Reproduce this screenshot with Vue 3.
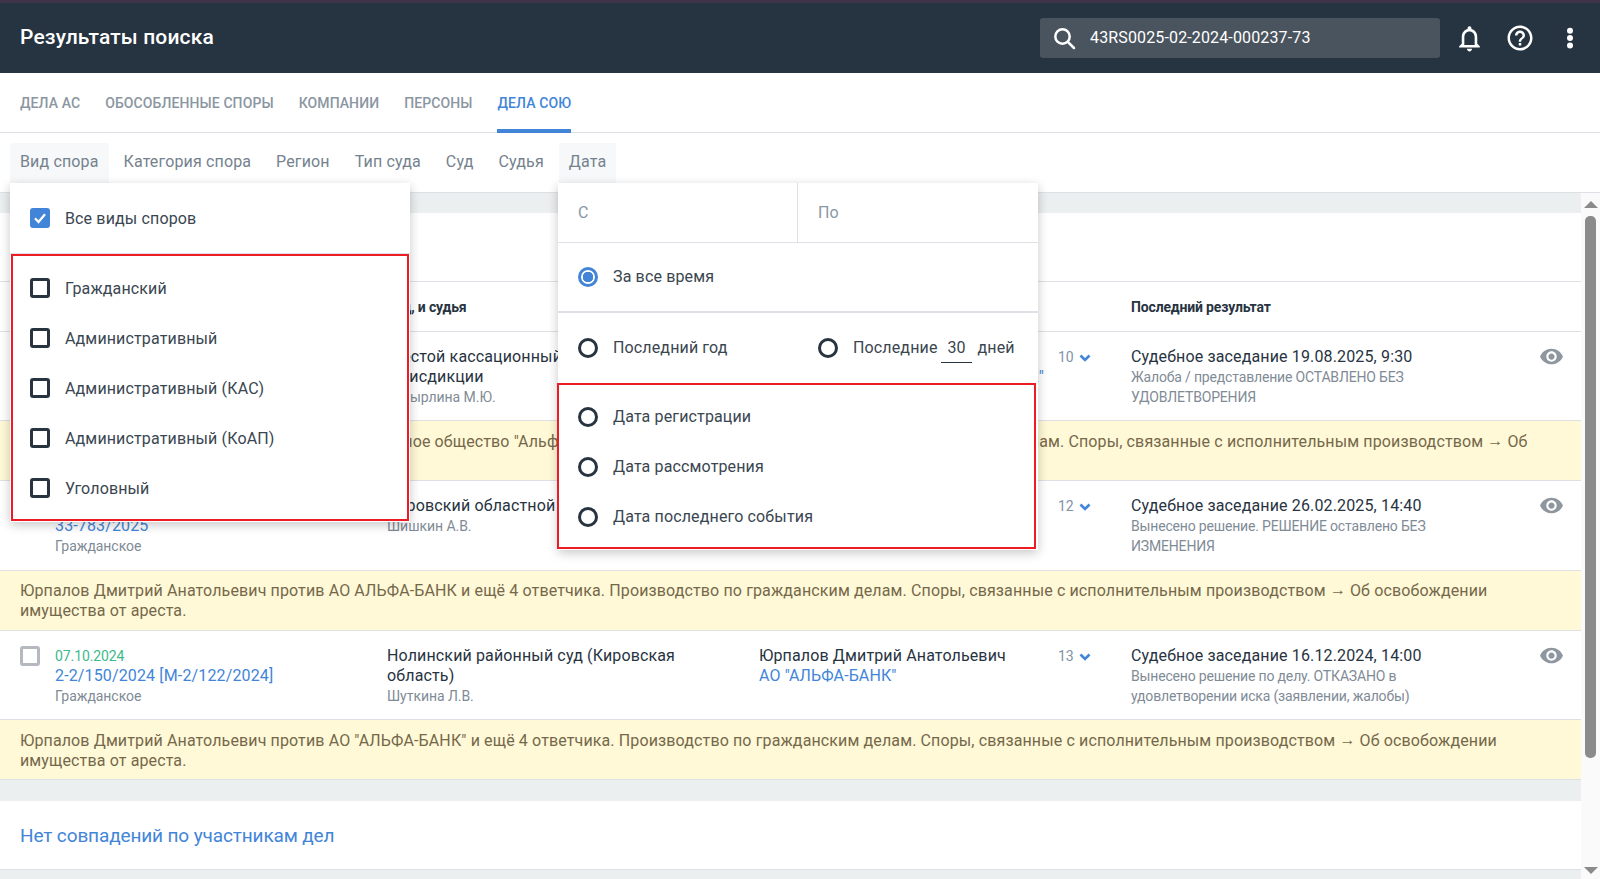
<script setup>
const tabs = ['Дела АС', 'Обособленные споры', 'Компании', 'Персоны', 'Дела СОЮ']
const filters = ['Вид спора', 'Категория спора', 'Регион', 'Тип суда', 'Суд', 'Судья', 'Дата']
const disputeKinds = ['Гражданский', 'Административный', 'Административный (КАС)', 'Административный (КоАП)', 'Уголовный']
const dateKinds = ['Дата регистрации', 'Дата рассмотрения', 'Дата последнего события']
const rows = [
  {
    date: '12.05.2025', number: '88-15420/2025', kind: 'Гражданское',
    court: 'Шестой кассационный суд общей юрисдикции', judge: 'Жмырлина М.Ю.',
    plaintiff: 'Юрпалов Дмитрий Анатольевич', defendant: 'Акционерное общество "Альфа-Банк"', count: 10,
    title: 'Судебное заседание 19.08.2025, 9:30', result: 'Жалоба / представление ОСТАВЛЕНО БЕЗ УДОВЛЕТВОРЕНИЯ',
    noteStart: 'Юрпалов Дмитрий Анатольевич против Акционерное общество "Альфа-Банк" и ещё 4 ответчика. Производство по гражданским делам. Споры, связанные с исполнительным производством '
  },
  {
    date: '20.01.2025', number: '33-783/2025', kind: 'Гражданское',
    court: 'Кировский областной суд', judge: 'Шишкин А.В.',
    plaintiff: 'Юрпалов Дмитрий Анатольевич', defendant: 'АО АЛЬФА-БАНК', count: 12,
    title: 'Судебное заседание 26.02.2025, 14:40', result: 'Вынесено решение. РЕШЕНИЕ оставлено БЕЗ ИЗМЕНЕНИЯ',
    noteStart: 'Юрпалов Дмитрий Анатольевич против АО АЛЬФА-БАНК и ещё 4 ответчика. Производство по гражданским делам. Споры, связанные с исполнительным производством '
  },
  {
    date: '07.10.2024', number: '2-2/150/2024 [М-2/122/2024]', kind: 'Гражданское',
    court: 'Нолинский районный суд (Кировская область)', judge: 'Шуткина Л.В.',
    plaintiff: 'Юрпалов Дмитрий Анатольевич', defendant: 'АО "АЛЬФА-БАНК"', count: 13,
    title: 'Судебное заседание 16.12.2024, 14:00', result: 'Вынесено решение по делу. ОТКАЗАНО в удовлетворении иска (заявлении, жалобы)',
    noteStart: 'Юрпалов Дмитрий Анатольевич против АО "АЛЬФА-БАНК" и ещё 4 ответчика. Производство по гражданским делам. Споры, связанные с исполнительным производством '
  }
]
</script>

<template>
  <div class="page">
    <header class="topbar">
      <h1 class="title">Результаты поиска</h1>
      <div class="search">
        <svg class="search-icon" width="26" height="26" viewBox="0 0 26 26" fill="none" stroke="#fff" stroke-width="2.5">
          <circle cx="11.5" cy="11.5" r="7.2" />
          <path d="M16.8 16.8 23 23" stroke-linecap="round" />
        </svg>
        <span class="search-text">43RS0025-02-2024-000237-73</span>
      </div>
      <div class="top-icons">
        <svg width="31" height="31" viewBox="0 0 24 24" fill="#fff">
          <path d="M18 16v-5c0-3.07-1.63-5.64-4.5-6.32V4c0-.83-.67-1.5-1.5-1.5s-1.5.67-1.5 1.5v.68C7.64 5.36 6 7.92 6 11v5l-2 2v1h16v-1l-2-2zm-2 1H8v-6c0-2.48 1.51-4.5 4-4.5s4 2.02 4 4.5v6zM12 22c1.1 0 2-.9 2-2h-4c0 1.1.9 2 2 2z" />
        </svg>
        <svg width="30" height="30" viewBox="0 0 24 24" fill="#fff">
          <path d="M11 18h2v-2h-2v2zm1-16C6.48 2 2 6.48 2 12s4.48 10 10 10 10-4.48 10-10S17.52 2 12 2zm0 18c-4.41 0-8-3.59-8-8s3.59-8 8-8 8 3.59 8 8-3.59 8-8 8zm0-14c-2.21 0-4 1.79-4 4h2c0-1.1.9-2 2-2s2 .9 2 2c0 2-3 1.75-3 5h2c0-2.25 3-2.5 3-5 0-2.21-1.79-4-4-4z" />
        </svg>
        <svg width="30" height="30" viewBox="0 0 30 30" fill="#fff">
          <circle cx="15" cy="7.7" r="3" />
          <circle cx="15" cy="15" r="3" />
          <circle cx="15" cy="22.5" r="3" />
        </svg>
      </div>
    </header>

    <nav class="tabs">
      <a v-for="(t, i) in tabs" :key="t" class="tab" :class="{ active: i === 4 }">{{ t }}</a>
    </nav>

    <div class="filters">
      <span v-for="(f, i) in filters" :key="f" class="filter" :class="{ open: i === 0 || i === 6 }">{{ f }}</span>
    </div>

    <div class="body">
      <main class="content">
        <div class="gap-band"></div>
        <section class="list">
          <div class="list-head"></div>
          <div class="row head-row">
            <span></span>
            <span></span>
            <span class="th">Суд, и судья</span>
            <span></span>
            <span></span>
            <span class="th">Последний результат</span>
            <span></span>
          </div>
          <template v-for="r in rows" :key="r.number">
            <div class="row">
              <span class="row-check"></span>
              <div>
                <div class="date">{{ r.date }}</div>
                <a class="number">{{ r.number }}</a>
                <div class="sub">{{ r.kind }}</div>
              </div>
              <div class="court">
                <div class="line">{{ r.court }}</div>
                <div class="sub">{{ r.judge }}</div>
              </div>
              <div>
                <div class="line">{{ r.plaintiff }}</div>
                <a class="line party">{{ r.defendant }}</a>
              </div>
              <div class="count">
                {{ r.count }}
                <svg width="12" height="8" viewBox="0 0 12 8" fill="none" stroke="#4285d8" stroke-width="2.6">
                  <path d="M1.5 1.5 6 6l4.5-4.5" />
                </svg>
              </div>
              <div class="result">
                <div class="line">{{ r.title }}</div>
                <div class="sub result-sub">{{ r.result }}</div>
              </div>
              <div class="eye">
                <svg width="25" height="25" viewBox="0 0 24 24" fill="#8e979f">
                  <path d="M12 4.5C7 4.5 2.73 7.61 1 12c1.73 4.39 6 7.5 11 7.5s9.27-3.11 11-7.5c-1.73-4.39-6-7.5-11-7.5zM12 17c-2.76 0-5-2.24-5-5s2.24-5 5-5 5 2.24 5 5-2.24 5-5 5zm0-8c-1.66 0-3 1.34-3 3s1.34 3 3 3 3-1.34 3-3-1.34-3-3-3z" />
                </svg>
              </div>
            </div>
            <div class="note">{{ r.noteStart }}<span class="arr">→</span> Об освобождении имущества от ареста.</div>
          </template>
        </section>
        <div class="gap-band wide"></div>
        <section class="empty">Нет совпадений по участникам дел</section>
        <div class="gap-band tail"></div>
      </main>

      <aside class="scrollbar">
        <span class="arrow up"></span>
        <span class="thumb"></span>
        <span class="arrow down"></span>
      </aside>
    </div>

    <div class="menu menu-kinds">
      <label class="opt opt-all">
        <span class="box checked">
          <svg width="14" height="14" viewBox="0 0 14 14" fill="none" stroke="#fff" stroke-width="2.2">
            <path d="M2 7.2 5.5 11 12 3.2" />
          </svg>
        </span>
        Все виды споров
      </label>
      <div class="marked">
        <label v-for="k in disputeKinds" :key="k" class="opt">
          <span class="box"></span>
          {{ k }}
        </label>
      </div>
    </div>

    <div class="menu menu-date">
      <div class="date-inputs">
        <span class="date-input">С</span>
        <span class="date-input">По</span>
      </div>
      <label class="opt opt-period first">
        <span class="radio on"></span>
        <span class="t">За все время</span>
      </label>
      <div class="opt-period split">
        <label class="opt inline">
          <span class="radio"></span>
          <span class="t">Последний год</span>
        </label>
        <label class="opt inline">
          <span class="radio"></span>
          <span class="t">Последние</span>
          <span class="days">30</span>
          <span class="t">дней</span>
        </label>
      </div>
      <div class="marked marked-date">
        <label v-for="k in dateKinds" :key="k" class="opt">
          <span class="radio"></span>
          <span class="t">{{ k }}</span>
        </label>
      </div>
    </div>
  </div>
</template>

<style scoped>
.page {
  position: relative;
  height: 879px;
  overflow: hidden;
  display: flex;
  flex-direction: column;
  background: #fff;
  color: #27333f;
  font-family: Roboto, "Liberation Sans", sans-serif;
  font-size: 16px;
  letter-spacing: 0.14px;
}
.topbar {
  flex: none;
  height: 70px;
  border-top: 3px solid #3f3349;
  background: #263340;
  display: flex;
  align-items: center;
  padding: 0 15px 0 20px;
}
.title {
  margin: 0;
  padding-bottom: 2px;
  flex: 1;
  color: #fff;
  font-size: 21px;
  font-weight: 500;
}
.search {
  width: 400px;
  height: 40px;
  box-sizing: border-box;
  padding-left: 11px;
  display: flex;
  align-items: center;
  gap: 13px;
  border-radius: 3px;
  background: #4a545e;
  color: #fff;
}
.search-text {
  padding-bottom: 2px;
}
.top-icons {
  margin-left: 14px;
  width: 131px;
  display: flex;
  justify-content: space-between;
  align-items: center;
}
.tabs {
  flex: none;
  height: 60px;
  box-sizing: border-box;
  display: flex;
  gap: 25px;
  padding-left: 20px;
  border-bottom: 1px solid #dde1e5;
}
.tab {
  box-sizing: border-box;
  height: 60px;
  line-height: 60px;
  color: #8a96a1;
  font-size: 14px;
  font-weight: 500;
  letter-spacing: 0.1px;
  text-transform: uppercase;
}
.tab.active {
  color: #4285d8;
  border-bottom: 4px solid #4285d8;
}
.filters {
  flex: none;
  height: 60px;
  box-sizing: border-box;
  display: flex;
  gap: 5px;
  padding: 10px 0 0 10px;
  border-bottom: 1px solid #dde1e5;
}
.filter {
  height: 40px;
  line-height: 38px;
  padding: 0 10px;
  color: #75828e;
}
.filter.open {
  background: #f6f8f9;
}
.body {
  flex: 1;
  min-height: 0;
  display: flex;
}
.content {
  flex: 1;
  min-width: 0;
  display: flex;
  flex-direction: column;
}
.gap-band {
  flex: none;
  height: 20px;
  background: #ebeff0;
}
.gap-band.wide {
  height: 21px;
}
.gap-band.tail {
  flex: 1;
  border-top: 1px solid #dde1e5;
}
.list-head {
  height: 68px;
  border-bottom: 1px solid #dde1e5;
}
.row {
  display: grid;
  grid-template-columns: 35px 332px 372px 299px 73px 359px 1fr;
  height: 89.33px;
  box-sizing: border-box;
  padding: 15px 0 0 20px;
  border-bottom: 1px solid #dde1e5;
}
.head-row {
  height: 50px;
  padding-top: 16px;
}
.th {
  font-size: 14px;
  font-weight: 700;
  line-height: 18px;
  letter-spacing: -0.15px;
  white-space: nowrap;
}
.row-check {
  width: 20px;
  height: 20px;
  box-sizing: border-box;
  border: 3px solid #b3b9bf;
  border-radius: 3px;
}
.date {
  font-size: 14px;
  letter-spacing: -0.1px;
  line-height: 20px;
  color: #3cb98c;
}
.number {
  display: block;
  line-height: 20px;
  color: #4285d8;
}
.sub {
  font-size: 14px;
  line-height: 20px;
  letter-spacing: -0.05px;
  color: #7f8b96;
}
.result-sub {
  letter-spacing: -0.17px;
}
.line {
  display: block;
  line-height: 20px;
}
.court {
  padding-right: 40px;
}
.party {
  color: #4285d8;
  letter-spacing: 0.1px;
  white-space: nowrap;
}
.count {
  display: flex;
  align-items: flex-start;
  gap: 5px;
  font-size: 14px;
  line-height: 20px;
  letter-spacing: 0;
  color: #7f93a6;
}
.count svg {
  margin-top: 7px;
}
.eye {
  padding-left: 49px;
  margin-top: -3px;
}
.note {
  height: 60px;
  box-sizing: border-box;
  padding: 10.6px 20px 0;
  line-height: 20px;
  letter-spacing: 0.125px;
  color: #75684a;
  background: #fff9d8;
  border-bottom: 1px solid #dde1e5;
}
.arr {
  line-height: 0;
  vertical-align: 1px;
  letter-spacing: 0;
}
.empty {
  flex: none;
  height: 68px;
  box-sizing: border-box;
  padding-left: 20px;
  line-height: 70px;
  font-size: 19px;
  letter-spacing: -0.13px;
  color: #4285d8;
}
.scrollbar {
  flex: none;
  width: 19px;
  background: #fafafa;
  display: flex;
  flex-direction: column;
  align-items: center;
  padding-top: 8px;
  box-sizing: border-box;
}
.arrow {
  width: 0;
  height: 0;
  border-left: 7px solid transparent;
  border-right: 7px solid transparent;
}
.arrow.up {
  border-bottom: 7px solid #8b8b8b;
}
.arrow.down {
  margin-top: 109px;
  border-top: 7px solid #8b8b8b;
}
.thumb {
  width: 11px;
  height: 542px;
  margin-top: 8px;
  border-radius: 5px;
  background: #8b8b8b;
}
.menu {
  position: absolute;
  top: 183px;
  background: #fff;
  box-shadow: 0 3px 10px rgba(0, 0, 0, 0.22);
  color: #3a4651;
}
.menu-kinds {
  left: 10px;
  width: 400px;
  height: 339px;
}
.menu-date {
  left: 558px;
  width: 480px;
  height: 367px;
}
.opt {
  display: flex;
  align-items: center;
  gap: 15px;
  height: 50px;
  padding-left: 20px;
}
.opt-all {
  height: 71px;
  border-bottom: 1px solid #dde1e5;
  box-sizing: border-box;
}
.marked {
  box-sizing: border-box;
  margin: 0 1px;
  height: 267px;
  padding: 7px 0;
  border: 2px solid #ed1c24;
}
.marked .opt {
  padding-left: 17px;
}
.t {
  padding-bottom: 2px;
}
.box {
  flex: none;
  width: 20px;
  height: 20px;
  box-sizing: border-box;
  border: 3px solid #27333f;
  border-radius: 3px;
  display: flex;
  align-items: center;
  justify-content: center;
}
.box.checked {
  border: 0;
  background: #4285d8;
}
.radio {
  flex: none;
  width: 20px;
  height: 20px;
  box-sizing: border-box;
  border: 3px solid #27333f;
  border-radius: 50%;
}
.radio.on {
  border-color: #4285d8;
  background: radial-gradient(circle, #4285d8 0 5px, #fff 5.5px);
}
.date-inputs {
  display: grid;
  grid-template-columns: 240px 1fr;
  height: 60px;
  box-sizing: border-box;
  border-bottom: 1px solid #dde1e5;
}
.date-input {
  padding-left: 20px;
  line-height: 60px;
  color: #8a97a3;
}
.date-input:first-child {
  border-right: 1px solid #dde1e5;
}
.opt-period.first {
  height: 70px;
  box-sizing: border-box;
  border-bottom: 2px solid #dde1e5;
}
.split {
  display: flex;
  height: 70px;
  align-items: center;
  box-sizing: border-box;
}
.inline {
  height: auto;
}
.inline:first-child {
  width: 240px;
  box-sizing: border-box;
}
.days {
  width: 31px;
  margin: 0 -9.5px 0 -11.5px;
  line-height: 29px;
  text-align: center;
  border-bottom: 1px solid #27333f;
}
.marked-date {
  margin: 0 2px 0 -1px;
  height: 166px;
}
.marked-date .opt {
  padding-left: 19px;
}
</style>

<style>
html, body { margin: 0; background: #fff; }
</style>
